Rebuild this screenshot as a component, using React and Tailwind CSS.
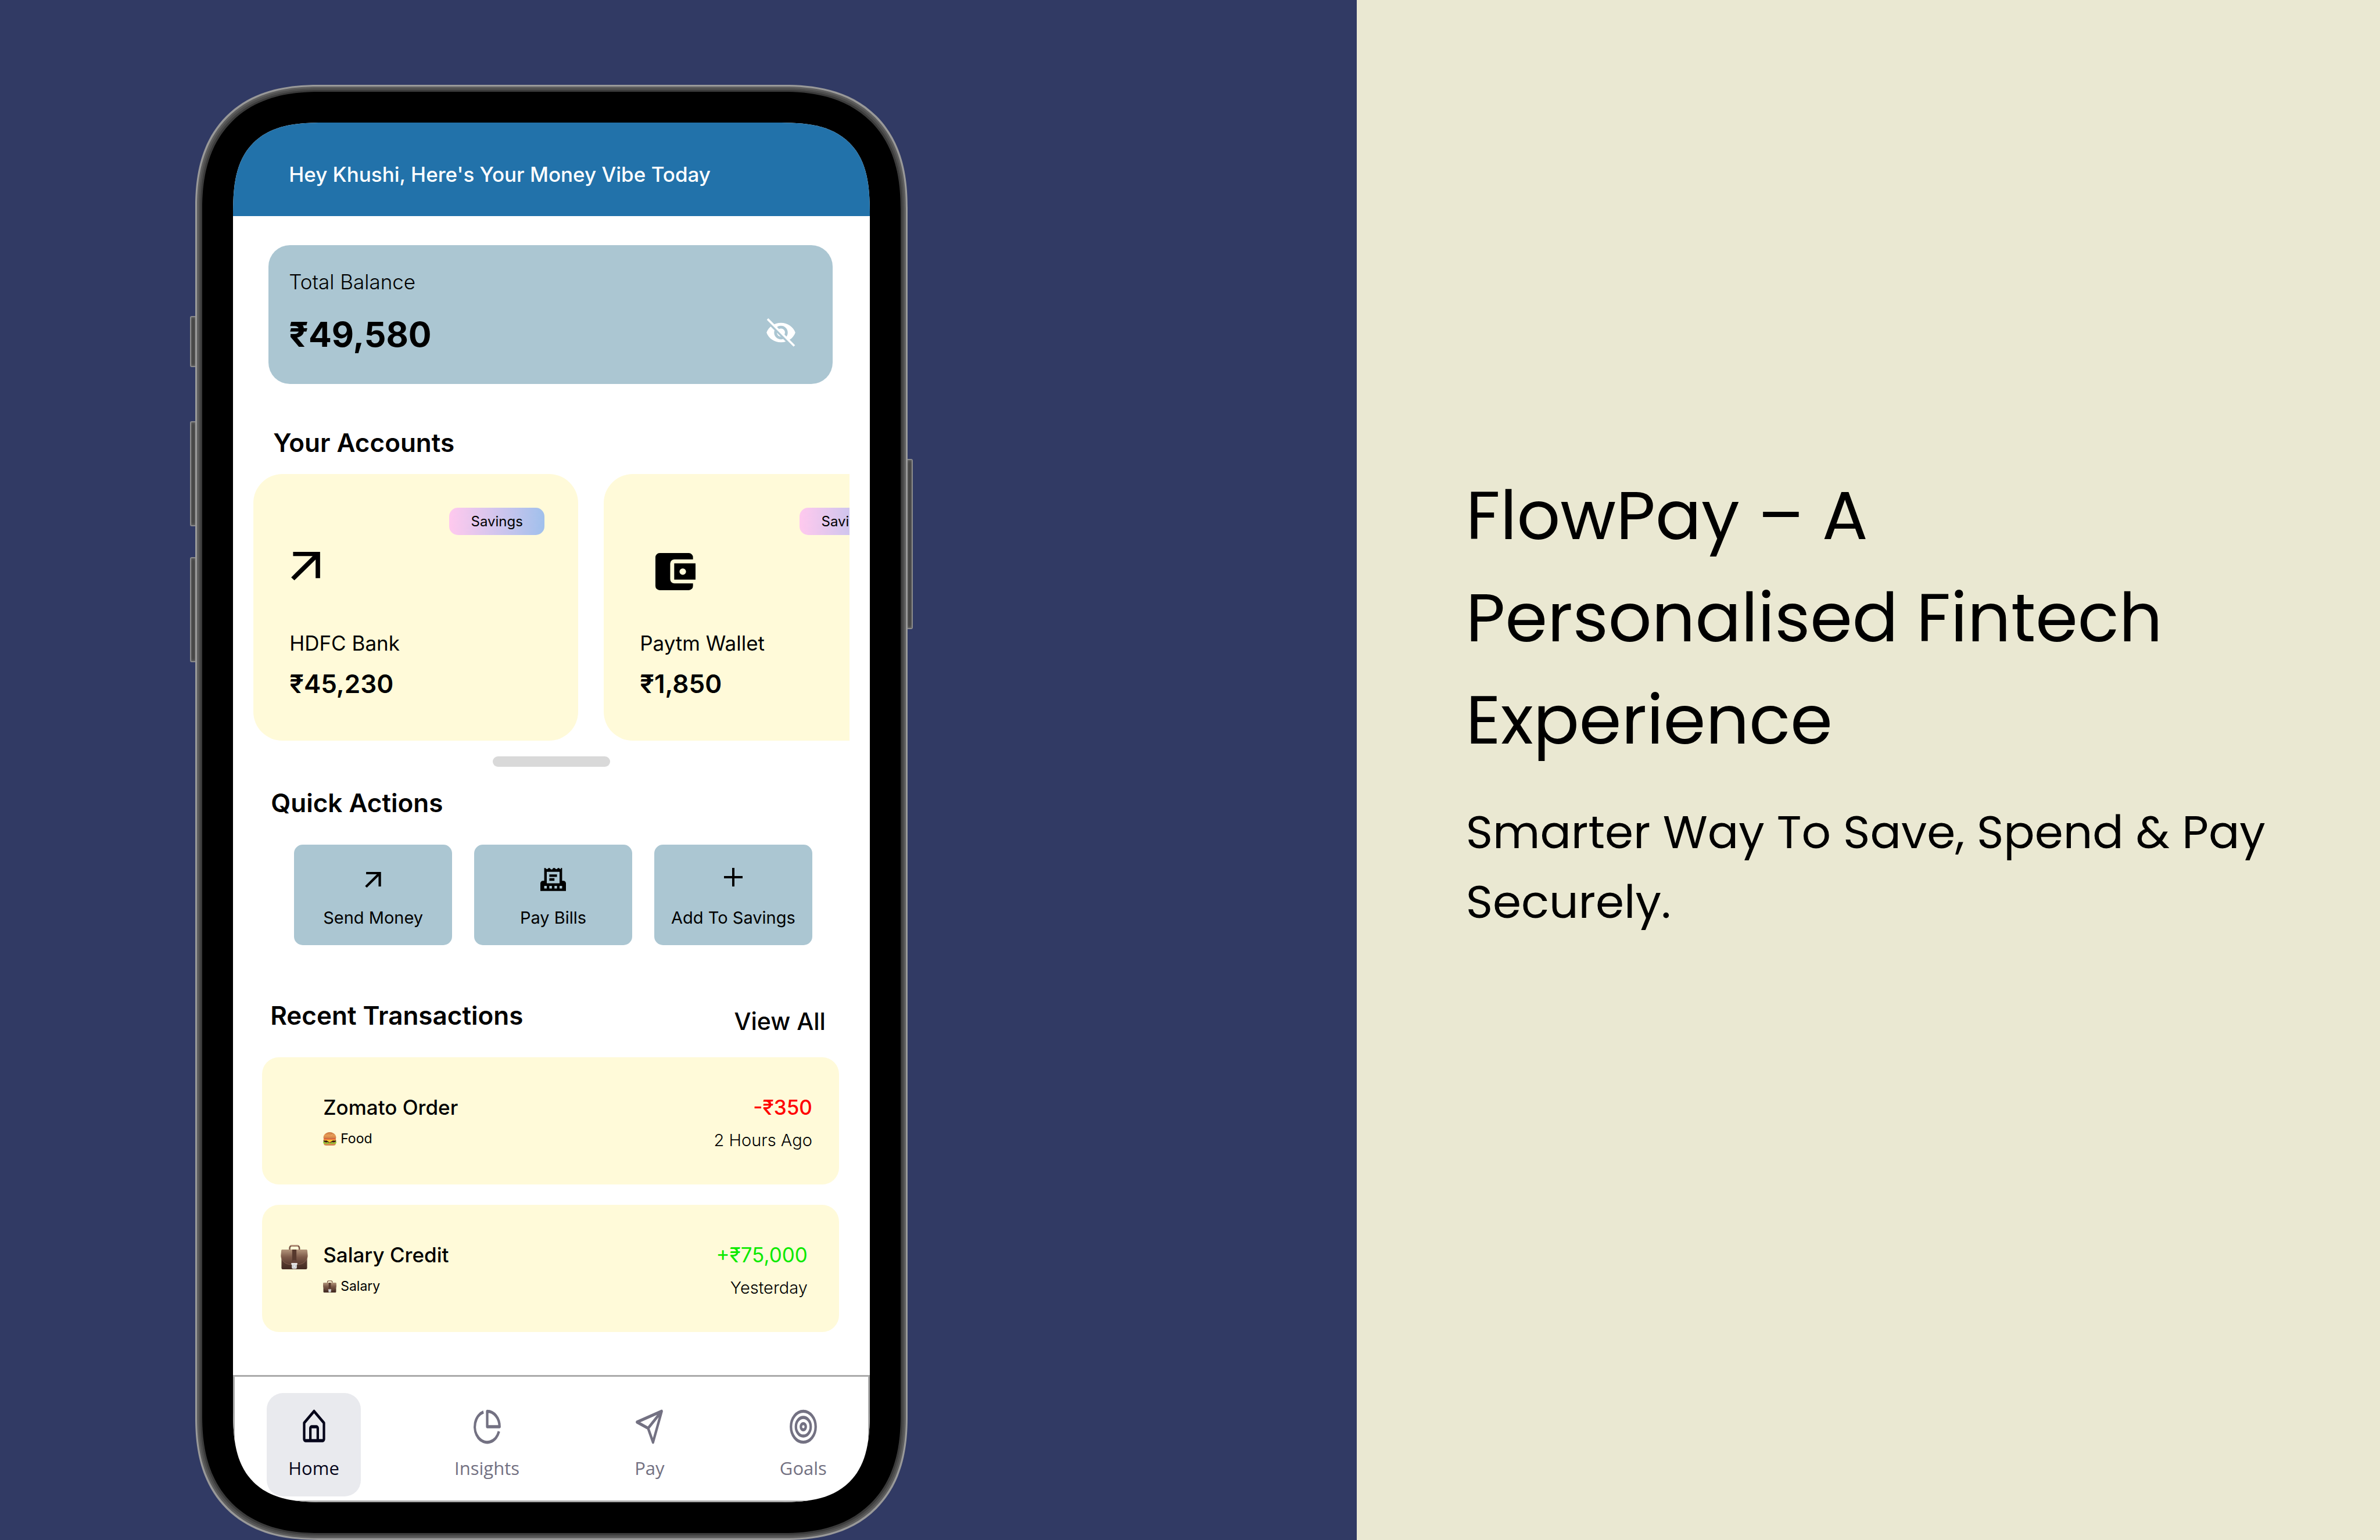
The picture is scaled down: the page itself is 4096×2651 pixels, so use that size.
import React from "react";

function EyeOffIcon() {
  return (
    <svg viewBox="0 0 68 67" className="h-[49px] w-[50px]" aria-hidden="true">
      <defs>
        <mask id="slash-cut">
          <rect width="68" height="67" fill="white" />
          <path d="M-4 1 62 67" stroke="black" strokeWidth="6" />
        </mask>
      </defs>
      <g mask="url(#slash-cut)">
        <path
          fillRule="evenodd"
          fill="white"
          d="M34 10.500C18 10.500 5 20 0 33.500 5 47 18 56.500 34 56.500S63 47 68 33.500C63 20 50 10.500 34 10.500ZM34 17.500a16 16 0 1 1 0 32 16 16 0 0 1 0-32Z"
        />
        <circle cx="34" cy="33.500" r="9.500" fill="white" />
      </g>
      <path d="M2.500 1.500 65.500 65" stroke="white" strokeWidth="5" />
    </svg>
  );
}

function ArrowIcon({ className }) {
  return (
    <svg viewBox="0 0 68 67" className={className} aria-hidden="true" fill="currentColor">
      <path d="M4.500 0H68v62H57.500V18L7.500 67 0 60 50.500 10H4.500Z" />
    </svg>
  );
}

function WalletIcon() {
  return (
    <svg viewBox="0 0 95 88" className="mt-[2px] ml-[27px] h-[64px] w-[69px]" aria-hidden="true">
      <path d="M10 0H79a10 10 0 0 1 10 10V15H45a10 10 0 0 0-10 10V62a10 10 0 0 0 10 10H89v6a10 10 0 0 1-10 10H10A10 10 0 0 1 0 78V10A10 10 0 0 1 10 0Z" />
      <path
        fillRule="evenodd"
        d="M44.500 24.500H95V63H44.500ZM64.500 36.500a7.500 7.500 0 1 0 0 15h0.500a7.500 7.500 0 1 0 0-15Z"
      />
    </svg>
  );
}

function BillIcon() {
  return (
    <svg viewBox="0 0 60 54" className="h-[40px] w-[44px]" aria-hidden="true">
      <path
        fillRule="evenodd"
        d="M9 0h3q3 5 6 1.500l1-1.500h3q3 5 6 3l2-3h4q3 5 6 1.500l1-1.500h3q3 5 4 1l0-1H51V30h3a6 6 0 0 1 6 6V54H0V36a6 6 0 0 1 6-6H9ZM15 9V36H45V9ZM9 42v6h6v-6ZM21 42v6h6v-6ZM33 42v6h6v-6ZM45 42v6h6v-6Z"
      />
      <path d="M21 15H39v6H21ZM21 24H33v6H21Z" />
    </svg>
  );
}

function PlusIcon() {
  return (
    <svg viewBox="0 0 44 44" className="mb-2 size-[32px]" aria-hidden="true">
      <path d="M22 0V44M0 22H44" stroke="currentColor" strokeWidth="5.500" />
    </svg>
  );
}

function BriefcaseIcon({ className, id }) {
  const body = id + "-body";
  const flap = id + "-flap";
  return (
    <svg viewBox="0 0 64 58" className={className} aria-hidden="true">
      <defs>
        <linearGradient id={body} x1="0" y1="0" x2="0" y2="1">
          <stop offset="0" stopColor="#7a5a48" />
          <stop offset="1" stopColor="#432a22" />
        </linearGradient>
        <linearGradient id={flap} x1="0" y1="0" x2="0" y2="1">
          <stop offset="0" stopColor="#b3957b" />
          <stop offset="0.500" stopColor="#7d5a49" />
          <stop offset="1" stopColor="#593a2f" />
        </linearGradient>
      </defs>
      <path
        d="M21 11V8q0-6 6-6H38q6 0 6 6v3"
        fill="none"
        stroke="#7b5746"
        strokeWidth="3.500"
      />
      <path d="M24 2.500Q32 0.500 41 2.500" fill="none" stroke="#c09a82" strokeWidth="2" />
      <rect x="1.500" y="11" width="61" height="47" rx="3" fill={"url(#" + body + ")"} />
      <path
        d="M4 11H60q3 0 3 3L64 26Q61 45 44 47H20Q3 45 0 26L1 14q0-3 3-3Z"
        fill={"url(#" + flap + ")"}
      />
      <path d="M0.500 28Q4 44 20 46.500H44Q60 44 63.500 28" fill="none" stroke="#8a6654" strokeWidth="1" />
      <path d="M27 11H37V38H27Z" fill="#57392d" />
      <path d="M26 45V42q0-6 6-6t6 6v3Z" fill="#65443a" />
      <path d="M25 43.500H39V47H38v7q0 3-3 3H29q-3 0-3-3V47H25Z" fill="#d9dadc" />
      <path d="M25 43.500H39V46H25Z" fill="#f7f7f7" />
      <circle cx="32" cy="50.500" r="3" fill="#ececec" stroke="#b3b3b5" />
    </svg>
  );
}

function BurgerIcon() {
  return (
    <svg viewBox="0 0 30 30" className="size-[23px]" aria-hidden="true">
      <defs>
        <linearGradient id="bun" x1="0" y1="0" x2="0" y2="1">
          <stop offset="0" stopColor="#c5713a" />
          <stop offset="0.500" stopColor="#e89c55" />
          <stop offset="1" stopColor="#c9763f" />
        </linearGradient>
      </defs>
      <path d="M1.500 22H28.500v3q0 5-6 5H7.500q-6 0-6-5Z" fill="#d58a50" />
      <path d="M1 17H29V22Q15 25 1 22Z" fill="#3a1d12" />
      <path d="M0 22.500q2-3 4 0t4.500 0.500 4.500 1 4.500 0 4.500-1 4.500-0.500T30 22.500l-1 3q-2 1.500-4-0.500-2 2-4.500 0.500-3 1.500-5.500 0-3 1.500-5.500 0-3 1.500-4.500-0.500-2 1.500-4 0Z" fill="#8ccb2c" />
      <path d="M1 16H29L28 19 22 18.500 15 23 8 18.500 2 19Z" fill="#fcc52f" />
      <path d="M1.500 14H28.500V16.500H1.500Z" fill="#e2473a" />
      <path d="M1 14Q0 9 3.500 5 8 0 15 0T26.500 5Q30 9 29 14 15 16 1 14Z" fill="url(#bun)" />
      <path d="M11 4h1M18 6.500h1M15 3h1M21 4.500h1" stroke="#fbdcae" strokeWidth="1" />
    </svg>
  );
}

function NavIcon({ children }) {
  return (
    <svg
      viewBox="0 0 24 24"
      preserveAspectRatio="none"
      className="h-[64px] w-[51px]"
      fill="none"
      stroke="currentColor"
      strokeWidth="2"
      strokeLinejoin="round"
      aria-hidden="true"
    >
      {children}
    </svg>
  );
}

function AccountCard({ icon, name, amount }) {
  return (
    <article className="flex w-[559px] shrink-0 flex-col rounded-[50px] bg-[#fffad9] pt-[58px] pr-[58px] pb-[71px] pl-[62px]">
      <span className="flex h-[47px] w-[164px] items-center justify-center self-end rounded-[15px] bg-linear-to-r from-[#ffc9ee] to-[#a0c0ec] text-[24px]">
        Savings
      </span>
      <div className="h-[165px] pt-[29px]">{icon}</div>
      <h3 className="text-[35px] leading-[42px]">{name}</h3>
      <p className="mt-[22px] text-[44px] leading-[54px] font-semibold">{amount}</p>
    </article>
  );
}

function QuickAction({ icon, label }) {
  return (
    <button
      type="button"
      className="flex flex-col items-center gap-[28px] rounded-[15px] bg-[#abc6d2] pt-[40px] pb-[29px]"
    >
      <span className="flex h-[40px] items-center">{icon}</span>
      <span className="text-[29px] leading-[36px] whitespace-nowrap">{label}</span>
    </button>
  );
}

function Transaction({ icon, name, category, categoryIcon, amount, amountClass, time, edge }) {
  return (
    <li className={"flex h-[219px] items-start rounded-[29px] bg-[#fffad9] pt-[65px] pl-[32px] " + edge}>
      <span className="w-[73px] shrink-0 pt-[4px]">{icon}</span>
      <div className="flex flex-1 flex-col gap-[18px]">
        <h3 className="text-[35px] leading-[42px] font-medium">{name}</h3>
        <p className="flex items-center gap-[7px] text-[23px] leading-[30px]">
          {categoryIcon}
          {category}
        </p>
      </div>
      <div className="flex flex-col gap-[18px] text-right">
        <p className={"text-[35px] leading-[42px] " + amountClass}>{amount}</p>
        <p className="text-[29px] leading-[36px] font-light">{time}</p>
      </div>
    </li>
  );
}

function NavItem({ icon, label, active }) {
  return (
    <a
      href="#"
      aria-current={active ? "page" : undefined}
      className={
        "flex flex-col items-center gap-[16px] rounded-[28px] px-[37px] pt-[26px] pb-[26px] " +
        (active ? "bg-[#e9eaee] text-[#05051a]" : "text-[#737182]")
      }
    >
      <NavIcon>{icon}</NavIcon>
      <span className="font-['Open_Sans',sans-serif] text-[31px] leading-[46px]">{label}</span>
    </a>
  );
}

const sideButton =
  "absolute w-[9px] border-[#8a8a8a] bg-[#3d3d3d] shadow-[inset_0_0_5px_#777]";

export default function App() {
  return (
    <main className="flex min-h-screen font-[Inter,sans-serif] text-black">
      <section className="w-[57%] bg-[#313a64] pt-[146px]">
        <div className="relative ml-[14.4%] w-[52.5%]">
          <span className={sideButton + " top-[398px] -left-[9px] h-[88px] rounded-l-[3px] border-y-2 border-l-2"} />
          <span className={sideButton + " top-[579px] -left-[9px] h-[181px] rounded-l-[3px] border-y-2 border-l-2"} />
          <span className={sideButton + " top-[813px] -left-[9px] h-[181px] rounded-l-[3px] border-y-2 border-l-2"} />
          <span className={sideButton + " top-[644px] -right-[9px] h-[293px] rounded-r-[3px] border-y-2 border-r-2"} />

          <div className="relative rounded-[212px] bg-[#999999] p-[3px] [corner-shape:superellipse(1.25)]">
            <div className="rounded-[210px] bg-[#5f5f5f] p-[3px] [corner-shape:superellipse(1.25)]">
              <div className="rounded-[207px] bg-[#4d4d4d] p-[3px] [corner-shape:superellipse(1.25)]">
                <div className="rounded-[205px] bg-[#3a3a3a] p-[3px] [corner-shape:superellipse(1.25)]">
                  <div className="rounded-[203px] bg-black p-[53px] [corner-shape:superellipse(1.25)]">
                    <div className="overflow-hidden rounded-[161px] bg-white [corner-shape:superellipse(1.5)]">
                      <header className="h-[161px] bg-[#2272aa] pt-[68px] pl-[96px]">
                        <h1 className="text-[35px] leading-[42px] font-medium text-white">
                          Hey Khushi, Here's Your Money Vibe Today
                        </h1>
                      </header>

                      <section className="mt-[50px] mr-[64px] ml-[61px] rounded-[37px] bg-[#abc6d2] pt-[42px] pr-[64px] pb-[50px] pl-[35px]">
                        <h2 className="text-[35px] leading-[42px] font-light">Total Balance</h2>
                        <div className="mt-[35px] flex items-center justify-between">
                          <p className="text-[59px] leading-[70px] font-bold">₹49,580</p>
                          <button type="button" aria-label="Hide balance" className="mb-2">
                            <EyeOffIcon />
                          </button>
                        </div>
                      </section>

                      <h2 className="mt-[74px] ml-[69px] text-[44px] leading-[54px] font-semibold">
                        Your Accounts
                      </h2>
                      <div className="mx-[35px] mt-[27px] flex gap-[44px] overflow-hidden">
                        <AccountCard
                          icon={<ArrowIcon className="ml-[3px] h-[49px] w-[50px]" />}
                          name="HDFC Bank"
                          amount="₹45,230"
                        />
                        <AccountCard icon={<WalletIcon />} name="Paytm Wallet" amount="₹1,850" />
                      </div>
                      <div className="mx-auto mt-[27px] h-[18px] w-[202px] rounded-full bg-[#d9d9d9]" />

                      <h2 className="mt-[35px] ml-[65px] text-[44px] leading-[54px] font-semibold">
                        Quick Actions
                      </h2>
                      <div className="mt-[45px] mr-[99px] ml-[105px] grid grid-cols-3 gap-[38px]">
                        <QuickAction icon={<ArrowIcon className="h-[27px] w-[28px]" />} label="Send Money" />
                        <QuickAction icon={<BillIcon />} label="Pay Bills" />
                        <QuickAction icon={<PlusIcon />} label="Add To Savings" />
                      </div>

                      <div className="mt-[94px] mr-[76px] ml-[64px] flex items-start justify-between">
                        <h2 className="text-[44px] leading-[54px] font-semibold">Recent Transactions</h2>
                        <a href="#" className="mt-[12px] text-[41px] leading-[50px] font-medium">
                          View All
                        </a>
                      </div>
                      <ul className="mt-[37px] mr-[53px] ml-[50px] flex flex-col gap-[35px]">
                        <Transaction
                          name="Zomato Order"
                          category="Food"
                          categoryIcon={<BurgerIcon />}
                          amount="-₹350"
                          amountClass="font-medium text-[#ff0000]"
                          time="2 Hours Ago"
                          edge="pr-[46px]"
                        />
                        <Transaction
                          icon={<BriefcaseIcon id="case-large" className="h-[42px] w-[47px]" />}
                          name="Salary Credit"
                          category="Salary"
                          categoryIcon={<BriefcaseIcon id="case-small" className="h-[21px] w-[23px]" />}
                          amount="+₹75,000"
                          amountClass="text-[#0cea00]"
                          time="Yesterday"
                          edge="pr-[54px]"
                        />
                      </ul>

                      <nav className="mt-[74px] flex items-start justify-between border-3 border-[#aaaaaa] pt-[28px] pr-[34px] pb-[7px] pl-[55px]">
                        <NavItem
                          active
                          label="Home"
                          icon={
                            <>
                              <path d="M4 9.500 12 2l8 7.500V20a1 1 0 0 1-1 1H5a1 1 0 0 1-1-1Z" />
                              <path d="M9 21V13a1 1 0 0 1 1-1h4a1 1 0 0 1 1 1v8" />
                            </>
                          }
                        />
                        <NavItem
                          label="Insights"
                          icon={
                            <>
                              <path d="M21.500 15A10 10 0 1 1 9 2.500" />
                              <path d="M22 12A10 10 0 0 0 12 2V12Z" />
                            </>
                          }
                        />
                        <NavItem label="Pay" icon={<path d="M22 2 11 13M22 2 15 22 11 13 2 9Z" />} />
                        <NavItem
                          label="Goals"
                          icon={
                            <>
                              <circle cx="12" cy="12" r="10" />
                              <circle cx="12" cy="12" r="6" />
                              <circle cx="12" cy="12" r="2" />
                            </>
                          }
                        />
                      </nav>
                    </div>
                  </div>
                </div>
              </div>
            </div>
          </div>
        </div>
      </section>

      <section className="flex flex-1 flex-col justify-center bg-[#eae8d2] pb-[240px] pl-[188px] font-[Poppins,Inter,sans-serif]">
        <h2 className="max-w-[1300px] text-[117px] leading-[176px]">
          FlowPay – A Personalised Fintech Experience
        </h2>
        <p className="mt-[46px] max-w-[1480px] text-[79px] leading-[120px]">
          Smarter Way To Save, Spend &amp; Pay Securely.
        </p>
      </section>
    </main>
  );
}
